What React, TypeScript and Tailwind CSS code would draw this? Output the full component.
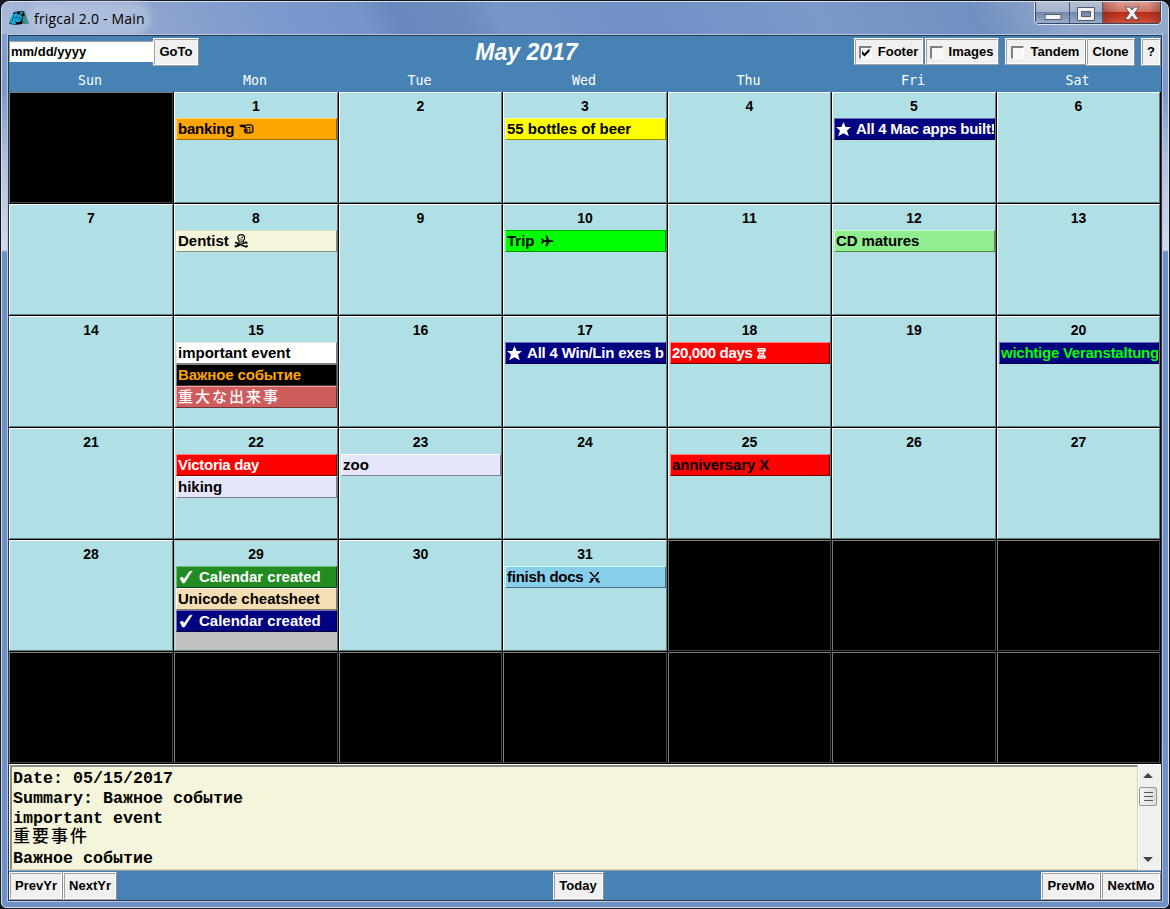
import React from 'react';

type Ev = { text: string; cls: string; lead?: React.ReactNode; tail?: React.ReactNode };

const Star = () => (
  <svg width="15" height="15" viewBox="0 0 15 15" className="mr-[5px] shrink-0">
    <path d="M7.5 0L9.6 5H15L11 8.6L12.8 14.3L7.5 11.2L2.2 14.3L4 8.6L0 5H5.4Z" fill="currentColor" />
  </svg>
);

const Check = () => (
  <svg width="14" height="14" viewBox="0 0 14 14" className="ml-px mr-[6px] shrink-0">
    <path d="M1 8L3.5 7L5 9.4L10.5 1.6L13.2 1L5.4 13H3.6Z" fill="currentColor" stroke="currentColor" strokeWidth="0.6" />
  </svg>
);

const Hand = () => (
  <svg width="15" height="10" viewBox="0 0 15 10" className="ml-[5px] shrink-0" fill="none" stroke="currentColor">
    <path d="M0.5 1.5H6.5M1.5 2.5H5L7.5 4" strokeWidth="1.5" />
    <path d="M6.5 1.5L8 0.8H11.5L13.8 2V7.8L11.5 8.8H7L5.5 7.8M5.5 5.2H8.5M5.5 5.2V7.8M6 6.8H9" strokeWidth="1.2" />
    <path d="M8.5 3.5H11.5M10 5H11.5M10 6.8H11.5" strokeWidth="1.2" />
  </svg>
);

const Skull = () => (
  <svg width="15" height="14" viewBox="0 0 15 14" className="ml-[5px] shrink-0" fill="none" stroke="currentColor" strokeWidth="1.2">
    <path d="M5 6.5L4 5V2.5L5.5 0.8H9L10.5 2.5V5L9.5 6.5V8H5Z" />
    <path d="M7.5 3.3H9M5.5 4.5H6.5M6.5 6H8.5" />
    <path d="M1 8.5L3 9L11 12.5L14 12M0.5 12L3.5 12L11 8.7L13.5 9M3 10.5H5M1.5 13.3L3 12M12.5 13.5L11.5 12M11 9.5L12.5 7.5" strokeWidth="1.4" />
  </svg>
);

const Plane = () => (
  <svg width="13" height="12" viewBox="0 0 13 12" className="ml-[6px] shrink-0">
    <path d="M0 3.5H1.5L3 5.2H5.5L4.5 0.5H6L8.5 5.2H11L13 6L11 7H8.5L6 11.5H4.5L5.5 7H3L1.5 8.5H0L1.3 6Z" fill="currentColor" />
  </svg>
);

const Rook = () => (
  <svg width="9" height="11" viewBox="0 0 9 11" className="ml-[5px] shrink-0" fill="none" stroke="currentColor" strokeWidth="1.4">
    <path d="M0.8 0.7H8.2M0.8 0.7V2.7H8.2V0.7M2.5 3V8M6.5 3V8M2 5.5H7M1 10H8M1 8V10.5M8 8V10.5M1 8H8" />
  </svg>
);

const Swords = () => (
  <svg width="11" height="11" viewBox="0 0 11 11" className="ml-[6px] shrink-0" fill="none" stroke="currentColor" strokeWidth="1.3">
    <path d="M1.5 0.5L9 9M9.5 0.5L2 9M0.5 0.7H2.5M8 0.7H10M1.5 6.5L4 9M9.5 6.5L7 9M0 9.8H3M8 9.8H11" />
  </svg>
);

const navy = 'bg-[#000080] text-white border-t-[#6f6fb0] border-l-[#6f6fb0] border-r-[#000040] border-b-[#000040]';
const red = 'bg-[#ff0000] border-t-[#ff8080] border-l-[#ff8080] border-r-[#800000] border-b-[#800000]';
const lavender = 'bg-[#e6e6fa] border-t-white border-l-white border-r-[#808090] border-b-[#808090]';

const events: Record<number, Ev[]> = {
  1: [{ text: 'banking', tail: <Hand />, cls: 'tracking-[-0.2px] bg-[#ffa500] border-t-[#ffd560] border-l-[#ffd560] border-r-[#a06800] border-b-[#a06800]' }],
  3: [{ text: '55 bottles of beer', cls: 'bg-[#ffff00] border-t-[#ffff90] border-l-[#ffff90] border-r-[#909000] border-b-[#909000]' }],
  5: [{ text: 'All 4 Mac apps built!', lead: <Star />, cls: `${navy} tracking-[-0.27px]` }],
  8: [{ text: 'Dentist', tail: <Skull />, cls: 'bg-[#f5f5dc] border-t-[#d8d8c4] border-l-white border-r-[#8c8c7c] border-b-[#8c8c7c]' }],
  10: [{ text: 'Trip', tail: <Plane />, cls: 'pl-[2px] bg-[#00ff00] border-t-[#00b000] border-l-[#60ff60] border-r-[#009000] border-b-[#009000]' }],
  12: [{ text: 'CD matures', cls: 'tracking-[-0.1px] bg-[#90ee90] border-t-[#c8ffc8] border-l-[#c8ffc8] border-r-[#508850] border-b-[#508850]' }],
  15: [
    { text: 'important event', cls: 'bg-white border-t-[#e4e4e4] border-l-[#e4e4e4] border-r-[#808080] border-b-[#808080]' },
    { text: 'Важное событие', cls: 'tracking-[-0.15px] bg-black text-[#ffa500] border-t-[#808080] border-l-[#808080] border-r-[#404040] border-b-[#404040]' },
    { text: '重大な出来事', cls: 'bg-[#cd5c5c] text-white tracking-[2px] [font-weight:500] border-t-[#ffa0a0] border-l-[#ffa0a0] border-r-[#703434] border-b-[#703434]' },
  ],
  17: [{ text: 'All 4 Win/Lin exes b', lead: <Star />, cls: `${navy} tracking-[-0.2px]` }],
  18: [{ text: '20,000 days', tail: <Rook />, cls: `${red} text-white tracking-[-0.35px]` }],
  20: [{ text: 'wichtige Veranstaltung', cls: 'tracking-[-0.25px] bg-[#000080] text-[#00ff00] border-t-[#6f6fb0] border-l-[#6f6fb0] border-r-[#000040] border-b-[#000040]' }],
  22: [
    { text: 'Victoria day', cls: `${red} text-white tracking-[-0.3px]` },
    { text: 'hiking', cls: lavender },
  ],
  23: [{ text: 'zoo', cls: lavender }],
  25: [{ text: 'anniversary X', cls: `${red} tracking-[-0.1px]` }],
  29: [
    { text: 'Calendar created', lead: <Check />, cls: 'bg-[#228b22] text-white border-t-[#70c070] border-l-[#70c070] border-r-[#104810] border-b-[#104810]' },
    { text: 'Unicode cheatsheet', cls: 'bg-[#f5deb3] border-t-white border-l-white border-r-[#8a7c60] border-b-[#8a7c60]' },
    { text: 'Calendar created', lead: <Check />, cls: navy },
  ],
  31: [{ text: 'finish docs', tail: <Swords />, cls: 'tracking-[-0.25px] bg-[#87ceeb] border-t-[#c8ffff] border-l-[#c8ffff] border-r-[#4a7484] border-b-[#4a7484]' }],
};

const cols = 'grid grid-cols-[165px_165px_164px_165px_164px_165px_164px]';

function Day({ n }: { n: number }) {
  const live = n >= 1 && n <= 31;
  if (!live) {
    return (
      <div className="bg-black pr-px pb-px">
        <div className="h-full border border-t-[#7c7c7c] border-l-[#7c7c7c] border-r-[#404040] border-b-[#404040] bg-black" />
      </div>
    );
  }
  const list = events[n] ?? [];
  return (
    <div className="min-w-0 bg-black pr-px pb-px">
      <div className={`flex h-full flex-col border border-r-[#5f7b7d] border-b-[#5f7b7d] bg-[#b0e0e6] pl-px ${n === 29 ? 'border-t-[#c0c0c0] border-l-[#c0c0c0]' : 'border-t-white border-l-white'}`}>
        <div className="h-[25px] shrink-0 pr-px text-center text-[14px] leading-[26px] font-bold">{n}</div>
        {list.map((e, i) => (
          <div key={i} className={`flex h-[22px] shrink-0 items-center overflow-hidden border pl-px text-[15px] leading-[20px] font-bold whitespace-nowrap ${e.cls}`}>
            {e.lead}
            <span>{e.text}</span>
            {e.tail}
          </div>
        ))}
        {n === 29 && <div className="grow bg-[#c0c0c0]" />}
      </div>
    </div>
  );
}

function Btn({ children, cls }: { children: React.ReactNode; cls: string }) {
  return (
    <div className={`shrink-0 border border-t-white border-l-white border-r-[#8c8c8c] border-b-[#a0a0a0] ${cls}`}>
      <div className="flex h-full items-center justify-center border border-t-[#a0a0a0] border-l-[#a0a0a0] border-r-white border-b-white bg-[#f0f0f0] pt-px text-[13px] font-bold whitespace-nowrap">
        {children}
      </div>
    </div>
  );
}

function Box({ on }: { on?: boolean }) {
  return (
    <span className="mr-[6px] -ml-px flex h-[13px] w-[13px] items-center justify-center border-t-2 border-r border-b border-l-2 border-t-[#808080] border-r-white border-b-white border-l-[#808080] bg-[#f8f8f8]">
      {on && (
        <svg width="9" height="9" viewBox="0 0 9 9">
          <path d="M1 3V6L3.5 8.5L8.5 3.5V0.5L3.5 5.5Z" fill="#000" />
        </svg>
      )}
    </span>
  );
}

function AppIcon() {
  return (
    <svg width="21" height="15" viewBox="0 0 21 15">
      <path d="M5 1L10 0H15L17 5L20 13H13L7 14L0 13L2 7Z" fill="#0d3b50" />
      <path d="M14.5 4L17 5L20 13H13Z" fill="#2f8078" />
      <path d="M2 6L5 2L8 3L13 5L12 9L10 12L5 13L1 12Z" fill="#16b4dc" />
      <path d="M6 1L14 1L15 4L8 3Z" fill="#1f9a9c" />
      <path d="M5 4L3 11M8 4L6 12M11 5L9 10M3 7L8 6L12 8" stroke="#0a5a88" strokeWidth="0.8" fill="none" />
      <path d="M7 11H11L13 8V13H7ZM8 1H11V3H8ZM13 2H15V5H13ZM4 2H6V3H4Z" fill="#000" />
    </svg>
  );
}

export default function App() {
  return (
    <div className="h-[909px] w-[1170px] overflow-hidden bg-[#14171d] font-['Liberation_Sans','Noto_Sans_CJK_JP',sans-serif] text-black">
      <div className="flex h-full flex-col rounded-t-[9px] rounded-b-[6px] border border-[#14171d] bg-[#14171d]">
        <div className="flex min-h-0 grow flex-col rounded-t-[8px] rounded-b-[5px] border border-[#d4dfed] bg-[linear-gradient(180deg,#8ca3ce_0,#7d98c9_90px,#b4c1dc_160px,#d2daea_248px,#6f90c4_250px,#7091c5_100%)] px-[5px] pb-[5px]">
          <div className="-mx-[5px] flex h-[32px] shrink-0 justify-between rounded-t-[7px] bg-[linear-gradient(62deg,#a9bad9_0%,#91a6cf_12%,#7c98cc_24%,#7895ca_31%,#6889bd_34%,#6d8bbd_40%,#7996c8_43%,#7290c5_54%,#7c99ca_70%,#718fc0_83%,#93a8cc_91%,#91a9ce_100%)]">
            <div className="flex h-full items-center pl-[7px]">
              <AppIcon />
              <span className="ml-[4px] rounded-full bg-[#b7c6df]/70 pt-px font-['Open_Sans','Noto_Sans',sans-serif] text-[14px] leading-[20px] tracking-[0.2px] shadow-[0_0_7px_6px_rgba(183,198,223,.7)]">frigcal 2.0 - Main</span>
            </div>
            <div className="mr-[6px] flex h-[23px] w-[128px] overflow-hidden rounded-b-[5px] border border-t-0 border-[#dce5f1] bg-[#39465d] p-px pt-0">
              <div className="flex w-[34px] items-center justify-center border-r border-[#4a5870] bg-[linear-gradient(#b5c1d3_0,#a5b4cb_45%,#7288aa_50%,#98add0_100%)]">
                <svg width="18" height="6" viewBox="0 0 18 6" className="mt-[8px]"><rect x="1" y="0.5" width="16" height="5" fill="#f4f4f2" stroke="#545b68" /></svg>
              </div>
              <div className="flex w-[33px] items-center justify-center border-r border-[#4a5870] bg-[linear-gradient(#b5c1d3_0,#a5b4cb_45%,#7288aa_50%,#98add0_100%)]">
                <svg width="18" height="14" viewBox="0 0 18 14" className="mt-[2px]"><path d="M.5.5H17.5V13.5H.5Z M4.5 4.5V9.5H13.5V4.5Z" fill="#f0f0f0" fillRule="evenodd" stroke="#525b6b" /></svg>
              </div>
              <div className="flex grow items-center justify-center bg-[linear-gradient(90deg,rgba(110,30,20,.35),transparent_25%,transparent_80%,rgba(90,35,30,.35)),linear-gradient(#dc9b90_0,#cf7162_45%,#b92a16_50%,#cf503b_100%)]">
                <svg width="16" height="15" viewBox="0 0 16 15" className="mt-[2px]"><path d="M1 1H5.5L8 4L10.5 1H15L10.5 7.2L15 13.5H10.5L8 10.2L5.5 13.5H1L5.5 7.2Z" fill="#f4f1f0" stroke="#5b5662" /></svg>
              </div>
            </div>
          </div>

          <div className="flex min-h-0 grow flex-col border border-[#b6c9e2]">
            <div className="flex min-h-0 grow flex-col border border-[#27384f] bg-[#4682b4]">
              <div className="flex h-[31px] shrink-0 items-center">
                <div className="h-[21px] w-[144px] border border-t-[#a0a0a0] border-r-white border-b-white border-l-[#a0a0a0] bg-white pl-px text-[13px] leading-[20px] font-bold">mm/dd/yyyy</div>
                <Btn cls="h-[28px] w-[46px]">GoTo</Btn>
                <div className="grow text-center text-[23px] leading-[30px] font-bold text-white italic">May 2017</div>
                <Btn cls="h-[27px] w-[70px]"><Box on />Footer</Btn>
                <Btn cls="ml-px h-[27px] w-[74px]"><Box />Images</Btn>
                <Btn cls="ml-[6px] h-[27px] w-[81px]"><Box /><span className="ml-px">Tandem</span></Btn>
                <Btn cls="h-[28px] w-[49px]">Clone</Btn>
                <Btn cls="ml-[6px] h-[28px] w-[20px]">?</Btn>
              </div>
              <div className={`${cols} h-[25px] shrink-0 text-center font-['DejaVu_Sans_Mono',monospace] text-[13.3px] leading-[28px] text-white`}>
                {['Sun', 'Mon', 'Tue', 'Wed', 'Thu', 'Fri', 'Sat'].map((d) => <div key={d} className="pr-[3px]">{d}</div>)}
              </div>
              <div className={`${cols} h-[672px] shrink-0 grid-rows-[repeat(6,112px)]`}>
                {Array.from({ length: 42 }, (_, i) => <Day key={i} n={i} />)}
              </div>
              <div className="flex h-[107px] shrink-0 border border-t-white border-r-white border-b-[#a0a0a0] border-l-white bg-[#f0f0f0]">
                <div className="w-[1128px] border-t-2 border-r border-b border-l-2 border-t-[#8c8c80] border-r-[#d4d4c0] border-b-[#d4d4c0] border-l-[#8c8c80] bg-[#f5f5dc] pt-px pl-px font-['Liberation_Mono','Noto_Sans_CJK_JP',monospace] text-[16.67px] leading-[20px] font-bold">
                  {['Date: 05/15/2017', 'Summary: Важное событие', 'important event', '重要事件', 'Важное событие'].map((t, i) => (
                    <div key={i} className={i === 3 ? 'h-[20px] text-[17px] font-medium tracking-[2px]' : 'h-[20px] leading-[21px]'}>{t}</div>
                  ))}
                </div>
                <div className="flex grow flex-col items-center border-l border-white pt-[8px] pr-[3px] pb-[8px]">
                  <svg width="10" height="5" viewBox="0 0 10 5"><path d="M0 5L5 0L10 5Z" fill="#444" /></svg>
                  <div className="mt-[9px] flex h-[19px] w-[18px] flex-col items-center justify-center gap-[3px] rounded-[2px] border border-[#959595] bg-[linear-gradient(90deg,#f6f6f6,#dcdcdc)]">
                    <i className="h-px w-[9px] bg-[#555]" /><i className="h-px w-[9px] bg-[#555]" /><i className="h-px w-[9px] bg-[#555]" />
                  </div>
                  <svg width="10" height="5" viewBox="0 0 10 5" className="mt-auto"><path d="M0 0L5 5L10 0Z" fill="#444" /></svg>
                </div>
              </div>
              <div className="flex h-[29px] shrink-0 items-center">
                <Btn cls="h-[28px] w-[54px]">PrevYr</Btn>
                <Btn cls="h-[28px] w-[54px]">NextYr</Btn>
                <div className="flex grow justify-center"><Btn cls="ml-[-2px] h-[28px] w-[51px]">Today</Btn></div>
                <Btn cls="h-[28px] w-[60px]">PrevMo</Btn>
                <Btn cls="h-[28px] w-[60px]">NextMo</Btn>
              </div>
            </div>
          </div>
        </div>
      </div>
    </div>
  );
}
